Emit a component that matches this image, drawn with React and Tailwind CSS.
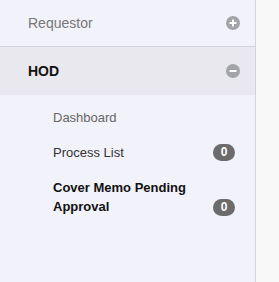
import { useState } from "react";

function CircleIcon({ open }) {
  return (
    <svg width="14" height="14" viewBox="0 0 14 14" className="shrink-0">
      <circle cx="7" cy="7" r="7" fill="#a3a3aa" />
      <rect x="3.5" y="6" width="7" height="2" fill="#fff" />
      {!open && <rect x="6" y="3.5" width="2" height="7" fill="#fff" />}
    </svg>
  );
}

function Badge({ count }) {
  return (
    <span className="shrink-0 w-[22px] h-[17px] rounded-full bg-[#6b6b6b] text-white text-[12px] font-bold leading-[17px] text-center">
      {count}
    </span>
  );
}

export default function App() {
  const [open] = useState("HOD");

  return (
    <div className="flex h-screen w-full font-['Liberation_Sans',Arial,sans-serif] bg-[#f8f8f8]">
      {/* Sidebar */}
      <div className="w-[256px] shrink-0 bg-[#f2f2fa] border-r border-[#d3d3db]">
        <div className="flex items-center justify-between h-[47px] pl-7 pr-[15px] border-b border-[#d3d3db]">
          <span className="text-[14px] leading-5 text-[#777]">Requestor</span>
          <CircleIcon open={open === "Requestor"} />
        </div>
        <div className="flex items-center justify-between h-[48px] pl-7 pr-[15px] bg-[#e8e8ee]">
          <span className="text-[14px] leading-5 font-bold text-[#111]">HOD</span>
          <CircleIcon open={open === "HOD"} />
        </div>

        {/* HOD submenu */}
        <ul className="pt-[5px]">
          <li className="flex items-center justify-between py-[7.5px] pl-[53px] pr-5">
            <span className="text-[13px] leading-5 text-[#666]">Dashboard</span>
          </li>
          <li className="flex items-center justify-between py-[7.5px] pl-[53px] pr-5">
            <span className="text-[13px] leading-5 text-[#333]">Process List</span>
            <Badge count={0} />
          </li>
          <li className="flex items-end justify-between py-[7.5px] pl-[53px] pr-5">
            <span className="text-[13px] leading-[19px] font-bold text-[#111] max-w-[150px]">
              Cover Memo Pending Approval
            </span>
            <Badge count={0} />
          </li>
        </ul>
      </div>
    </div>
  );
}
